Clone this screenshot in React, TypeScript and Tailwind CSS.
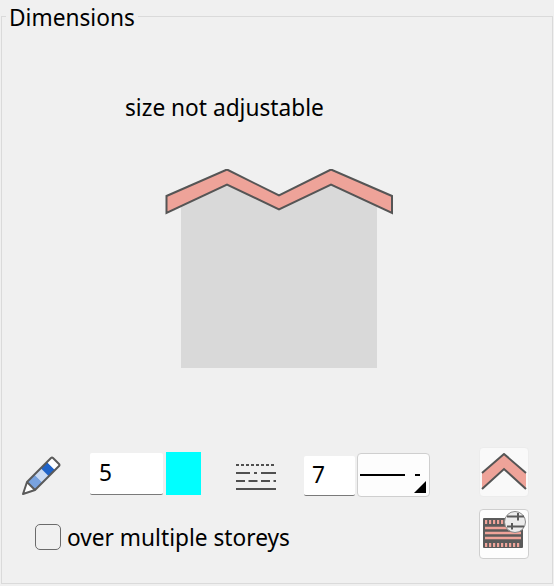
function PencilIcon() {
  return (
    <svg width="40" height="40" viewBox="0 0 40 40">
      <g transform="translate(0 1)">
        <path d="M5 26 L12.500 18.500 L20.500 26.500 L13 34 Z" fill="#79a3e0" />
        <path d="M12.500 18.500 L18.750 12.250 L26.750 20.250 L20.500 26.500 Z" fill="#c9daf3" />
        <path d="M18.750 12.250 L25 6 L33 14 L26.750 20.250 Z" fill="#1f63c8" />
        <path d="M25 6 L30 1 L38 9 L33 14 Z" fill="#ffffff" />
        <path d="M5 26 L13 34 L1 38 Z" fill="#ffffff" />
        <path
          d="M1 38 L5 26 L29 2 Q30 1 31 2 L37 8 Q38 9 37 10 L13 34 Z M5 26 L13 34"
          fill="none"
          stroke="#5a5a5a"
          strokeWidth="2"
          strokeLinejoin="round"
        />
      </g>
    </svg>
  );
}

function LineTypesIcon() {
  return (
    <svg width="40" height="26" viewBox="0 0 40 26" stroke="#505050" fill="none">
      <line x1="0" y1="1" x2="40" y2="1" strokeWidth="2" strokeDasharray="3 2" />
      <path d="M0 9H14M18 9H21M25 9H40" strokeWidth="2" />
      <line x1="0" y1="17" x2="40" y2="17" strokeWidth="2" strokeDasharray="9 3.500" />
      <line x1="0" y1="25" x2="40" y2="25" strokeWidth="2" />
    </svg>
  );
}

function BoardsIcon() {
  return (
    <svg width="48" height="48" viewBox="0 0 48 48">
      <rect x="3" y="8" width="40" height="30" rx="1" fill="#5a5a5a" />
      <path d="M5 12h20M5 35h36" stroke="#eea399" strokeWidth="4" strokeDasharray="2.200 1.800" />
      <path d="M5 18h36M5 23h36M5 28h36" stroke="#eea399" strokeWidth="2.500" />
      <circle cx="35" cy="12" r="10.500" fill="#ececec" stroke="#8a8a8a" strokeWidth="1" />
      <path d="M27 6.500h17M27 16.500h17" stroke="#5a5a5a" strokeWidth="2" />
      <path d="M38 3v7.500M32 13v6.500" stroke="#5a5a5a" strokeWidth="2" />
    </svg>
  );
}

export default function App() {
  return (
    <div className="w-[554px] h-[586px] bg-[#f0f0f0] overflow-hidden font-['Noto_Sans','Open_Sans',sans-serif] text-black">
      <fieldset className="ml-px mr-px h-[584px] border border-[#dadada] flex flex-col">
        <legend className="ml-[4px] px-[3px] pt-[3px] text-[22.700px] leading-[30px]">Dimensions</legend>

        <div className="flex flex-col items-center flex-1">
          <p className="mt-[60px] mr-[105px] text-[22.700px] leading-[30px] w-[199px] whitespace-nowrap">size not adjustable</p>
          <svg className="mt-[46px] ml-[5px]" width="230" height="202" viewBox="0 0 230 202">
            <path d="M16 37 L62 15.500 L114 40.500 L166 15.500 L212 37 V199 H16 Z" fill="#d9d9d9" />
            <path
              d="M1.500 27 L62 0.500 L114 26.500 L166 0.500 L227 27 V44 L166 15.500 L114 40.500 L62 15.500 L1.500 44 Z"
              fill="#eea399"
              stroke="#555555"
              strokeWidth="2"
              strokeLinejoin="miter"
            />
          </svg>
        </div>

        <div className="flex justify-between pl-[20px] pr-[23px] pb-[24px]">
          <div className="flex flex-col">
            <div className="flex items-end h-[48px]">
              <PencilIcon />
              <input
                readOnly
                value="5"
                className="ml-[28px] w-[73px] h-[42px] bg-white border-b border-[#7a7a7a] pl-[9px] pb-[2px] text-[22.700px] outline-none rounded-[2px]"
              />
              <div className="ml-[3px] w-[35px] h-[43px] bg-[#00ffff]" />
              <div className="ml-[35px] mb-[5px]">
                <LineTypesIcon />
              </div>
              <input
                readOnly
                value="7"
                className="ml-[28px] w-[51px] h-[40px] -mb-px bg-white border-b border-[#7a7a7a] pl-[8px] pb-[2px] text-[22.700px] outline-none rounded-[2px]"
              />
              <div className="relative ml-[2px] w-[73px] h-[44px] -mb-[2px] bg-[#fdfdfd] border border-[#cfcfcf] rounded-[4px] flex items-center pl-[2px]">
                <div className="w-[45px] h-[2px] bg-black" />
                <div className="ml-[10px] w-[5px] h-[2px] bg-black" />
                <div className="absolute right-[3px] bottom-[3px] w-0 h-0 border-l-[12px] border-b-[12px] border-l-transparent border-b-black" />
              </div>
            </div>
            <label className="flex items-center mt-[26px] ml-[13px]">
              <span className="w-[26px] h-[26px] bg-[#f0f0f0] border-[1.500px] border-[#6b6b6b] rounded-[5px]" />
              <span className="ml-[6px] pt-[2px] text-[22.700px] leading-[30px]">over multiple storeys</span>
            </label>
          </div>

          <div className="flex flex-col gap-[12px]">
            <button className="w-[50px] h-[50px] bg-[#f9f9f9] border border-[#ececec] rounded-[4px] flex items-center justify-center">
              <svg width="46" height="38" viewBox="0 0 46 38">
                <path d="M1 20 L23 1 L45 20 V36 L23 16 L1 36 Z" fill="#eea399" />
                <path
                  d="M1 20 L23 1 L45 20 M1 36 L23 16 L45 36"
                  fill="none"
                  stroke="#555555"
                  strokeWidth="2"
                />
              </svg>
            </button>
            <button className="w-[50px] h-[50px] bg-[#fdfdfd] border border-[#cfcfcf] rounded-[4px] flex items-center justify-center">
              <BoardsIcon />
            </button>
          </div>
        </div>
      </fieldset>
    </div>
  );
}
